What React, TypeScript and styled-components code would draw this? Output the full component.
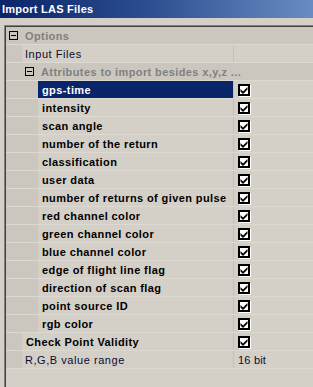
import React from "react";
import styled, { createGlobalStyle } from "styled-components";

const Global = createGlobalStyle`
  html, body { margin: 0; padding: 0; background: #d4d0c8; }
  body { font-family: Tahoma, "Liberation Sans", Arial, sans-serif; font-size: 11px; }
  #root { height: 387px; }
`;

const Window = styled.div`
  width: 313px;
  height: 387px;
  display: flex;
  flex-direction: column;
  background: #d4d0c8;
  overflow: hidden;
`;

const TitleBar = styled.div`
  height: 18px;
  flex: none;
  display: flex;
  align-items: center;
  padding-left: 2px;
  background: linear-gradient(to right, #0a246a 0px, #2d4f8f 150px, #6a8cc4 313px);
  color: #fff;
  font-weight: bold;
  font-size: 11px;
  letter-spacing: 0.25px;
  white-space: nowrap;
`;

const Gap = styled.div`
  height: 7px;
  flex: none;
`;

const Grid = styled.div`
  flex: 1;
  margin-left: 4px;
  border-top: 1px solid #808080;
  border-left: 1px solid #808080;
  display: flex;
  flex-direction: column;
`;

const GridInner = styled.div`
  flex: 1;
  border-top: 1px solid #404040;
  border-left: 1px solid #404040;
  display: flex;
  flex-direction: column;
`;

const Row = styled.div`
  height: 17px;
  flex: none;
  display: flex;
  border-bottom: 1px solid #dcd9d2;
`;

const CategoryRow = styled(Row)<{ $level: number }>`
  background: #cbc7bf;
  align-items: center;
  padding-left: ${(p) => 3 + p.$level * 16}px;
  gap: 7px;
  color: #808080;
  font-weight: bold;
  letter-spacing: 0.4px;
  white-space: nowrap;
`;

const Margin = styled.div<{ $level: number }>`
  width: ${(p) => 16 * (p.$level + 1)}px;
  flex: none;
  background: #cbc7bf;
`;

const Label = styled.div<{ $selected?: boolean; $bold?: boolean }>`
  flex: 1;
  min-width: 0;
  display: flex;
  align-items: center;
  padding-left: ${(p) => (p.$bold ? 4 : 3)}px;
  border-right: 1px solid #c4c0b8;
  background: ${(p) => (p.$selected ? "#0a246a" : "#d4d0c8")};
  color: ${(p) => (p.$selected ? "#fff" : p.$bold ? "#000" : "#0c0c2e")};
  font-weight: ${(p) => (p.$bold ? "bold" : "normal")};
  letter-spacing: ${(p) => (p.$bold ? 0.4 : 0.55)}px;
  white-space: nowrap;
  overflow: hidden;
`;

const Value = styled.div`
  width: 79px;
  flex: none;
  display: flex;
  align-items: center;
  padding-left: 4px;
  box-sizing: border-box;
  color: #0c0c2e;
  letter-spacing: 0.2px;
`;

const Expander = styled.span`
  width: 9px;
  height: 9px;
  box-sizing: border-box;
  border: 1px solid #000;
  position: relative;
  flex: none;
  &::after {
    content: "";
    position: absolute;
    left: 1px;
    right: 1px;
    top: 3px;
    height: 1px;
    background: #000;
  }
`;

const Check = styled.span`
  width: 12px;
  height: 12px;
  box-sizing: border-box;
  border: 2px solid #000;
  background: #fff;
  box-shadow: 1px 1px 0 #fff;
  display: flex;
  align-items: center;
  justify-content: center;
  margin-top: 1px;
`;

const CheckBox = () => (
  <Check>
    <svg width="8" height="8" viewBox="0 0 8 8">
      <path d="M0.5 3 L3 5.5 L7.5 1 L7.5 3.5 L3 8 L0.5 5.5 Z" fill="#000" />
    </svg>
  </Check>
);

const attributes = [
  "gps-time",
  "intensity",
  "scan angle",
  "number of the return",
  "classification",
  "user data",
  "number of returns of given pulse",
  "red channel color",
  "green channel color",
  "blue channel color",
  "edge of flight line flag",
  "direction of scan flag",
  "point source ID",
  "rgb color",
];

export default function App() {
  return (
    <Window>
      <Global />
      <TitleBar>Import LAS Files</TitleBar>
      <Gap />
      <Grid>
        <GridInner>
          <CategoryRow $level={0}>
            <Expander />
            <span>Options</span>
          </CategoryRow>
          <Row>
            <Margin $level={0} />
            <Label>Input Files</Label>
            <Value />
          </Row>
          <CategoryRow $level={1}>
            <Expander />
            <span>Attributes to import besides x,y,z ...</span>
          </CategoryRow>
          {attributes.map((a, i) => (
            <Row key={a}>
              <Margin $level={1} />
              <Label $bold $selected={i === 0}>{a}</Label>
              <Value>
                <CheckBox />
              </Value>
            </Row>
          ))}
          <Row>
            <Margin $level={0} />
            <Label $bold>Check Point Validity</Label>
            <Value>
              <CheckBox />
            </Value>
          </Row>
          <Row>
            <Margin $level={0} />
            <Label>R,G,B value range</Label>
            <Value>16 bit</Value>
          </Row>
        </GridInner>
      </Grid>
    </Window>
  );
}
